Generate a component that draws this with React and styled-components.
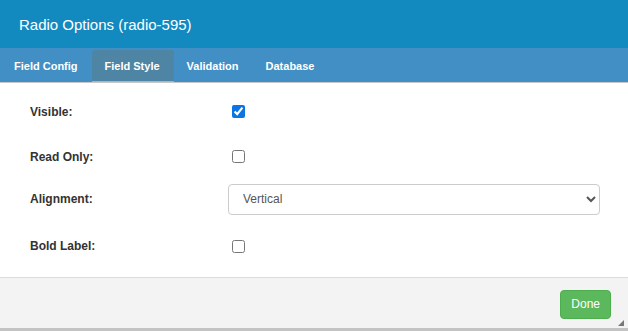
import styled, { createGlobalStyle } from "styled-components";

const Global = createGlobalStyle`
  body {
    margin: 0;
    font-family: "Liberation Sans", Arial, sans-serif;
    background: #fff;
  }
`;

const Dialog = styled.div`
  width: 628px;
  height: 331px;
  display: flex;
  flex-direction: column;
  position: relative;
  overflow: hidden;
`;

const Header = styled.div`
  height: 48px;
  background: #1289bf;
  color: #fff;
  font-size: 15px;
  display: flex;
  align-items: center;
  padding-left: 19px;
`;

const Tabs = styled.div`
  height: 34px;
  background: #428fc5;
  border-bottom: 1px solid #c8c8c8;
  display: flex;
  align-items: flex-end;
`;

const Tab = styled.div`
  height: 32px;
  padding: 0 14px 0 ${(p) => (p.first ? "14px" : "13px")};
  display: flex;
  align-items: center;
  color: #fff;
  font-size: 11px;
  font-weight: bold;
  box-sizing: border-box;
  border-radius: 3px 3px 0 0;
  background: ${(p) => (p.active ? "#4e85a4" : "transparent")};
  border-bottom: 1px solid ${(p) => (p.active ? "#8fd16f" : "transparent")};
`;

const Body = styled.div`
  flex: 1;
  padding: 6px 28px 0 30px;
  display: flex;
  flex-direction: column;
`;

const Row = styled.div`
  height: ${(p) => p.h}px;
  display: grid;
  grid-template-columns: 198px 1fr;
  align-items: center;
`;

const Label = styled.div`
  font-size: 12px;
  font-weight: bold;
  color: #333;
`;

const Check = styled.input.attrs({ type: "checkbox" })`
  display: block;
  width: 13px;
  height: 13px;
  margin: 0 0 0 4px;
  accent-color: #0b75e6;
`;

const Select = styled.select`
  width: 372px;
  height: 31px;
  border: 1px solid #ccc;
  border-radius: 4px;
  background: #fff;
  font-family: "Liberation Sans", Arial, sans-serif;
  font-size: 12px;
  color: #555;
  padding: 0 10px;
`;

const Footer = styled.div`
  height: 50px;
  background: #f3f3f3;
  border-top: 1px solid #dcdcdc;
  border-bottom: 3px solid #c3c3c3;
  display: flex;
  align-items: center;
  justify-content: flex-end;
  padding-right: 17px;
`;

const Done = styled.button`
  height: 29px;
  padding: 0 10px;
  background: #5cb85c;
  border: 1px solid #4cae4c;
  border-radius: 4px;
  color: #fff;
  font-family: "Liberation Sans", Arial, sans-serif;
  font-size: 12px;
  margin-top: 2px;
`;

const Grip = styled.div`
  position: absolute;
  right: 4px;
  bottom: 5px;
  width: 0;
  height: 0;
  border-left: 6px solid transparent;
  border-bottom: 6px solid #777;
`;

export default function App() {
  return (
    <Dialog>
      <Global />
      <Header>Radio Options (radio-595)</Header>
      <Tabs>
        <Tab first>Field Config</Tab>
        <Tab active>Field Style</Tab>
        <Tab>Validation</Tab>
        <Tab>Database</Tab>
      </Tabs>
      <Body>
        <Row h={45}>
          <Label>Visible:</Label>
          <div><Check defaultChecked /></div>
        </Row>
        <Row h={45}>
          <Label>Read Only:</Label>
          <div><Check /></div>
        </Row>
        <Row h={40}>
          <Label>Alignment:</Label>
          <Select defaultValue="Vertical">
            <option>Vertical</option>
            <option>Horizontal</option>
          </Select>
        </Row>
        <Row h={54}>
          <Label>Bold Label:</Label>
          <div><Check /></div>
        </Row>
      </Body>
      <Footer>
        <Done>Done</Done>
      </Footer>
      <Grip />
    </Dialog>
  );
}
